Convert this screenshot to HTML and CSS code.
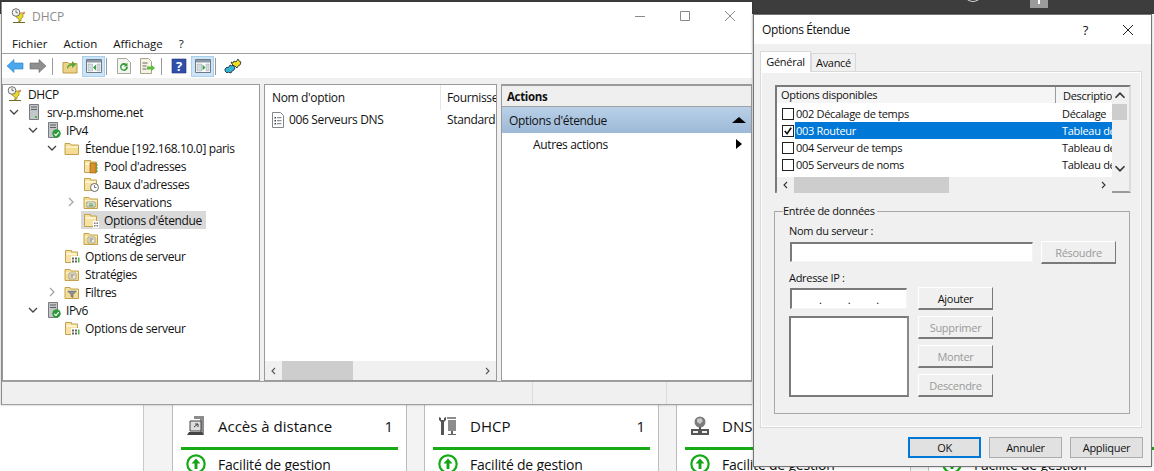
FILE: index.html
```html
<!DOCTYPE html>
<html lang="fr">
<head>
    <meta charset="UTF-8">
    <title>DHCP</title>
    <link rel="stylesheet" href="styles.css">
</head>
<body>
<svg class="defs" width="0" height="0">
    <symbol id="folder" viewBox="0 0 16 16">
        <path d="M1 3.500h5l1 1.500h7.500v9.500h-13.500z" fill="#f5dc94" stroke="#c4a24a"/>
        <path d="M2 6h12v2h-12z" fill="#fbeebf"/>
    </symbol>
    <symbol id="folder-open" viewBox="0 0 16 16">
        <path d="M1.500 2.500h6v1.500h6v10.500h-12z" fill="#f6e2a4" stroke="#c4a24a"/>
        <path d="M2.500 5h10v2h-10z" fill="#fdf3cf"/>
    </symbol>
    <symbol id="server" viewBox="0 0 16 16">
        <path d="M3.500 .5h9v15h-9z" fill="#c3c6c9" stroke="#777b7f"/>
        <path d="M5 2.500h6v1h-6zM5 5h6v1h-6z" fill="#5b5f62"/>
        <path d="M9 12h2v2h-2z" fill="#49b649"/>
    </symbol>
    <symbol id="check-badge" viewBox="0 0 16 16">
        <circle cx="8" cy="8" r="7.500" fill="#2e9b3a"/>
        <path d="M4 8.500l3 3 5-6" fill="none" stroke="#fff" stroke-width="2"/>
    </symbol>
    <symbol id="trophy" viewBox="0 0 16 16">
        <path d="M5 5h7v4l-2 2v2h-2v-2l-3-2z" fill="#e9d928" stroke="#8f8312" stroke-width=".7"/>
        <circle cx="5" cy="4.500" r="3.800" fill="#f4f4f4" stroke="#6e6e6e"/>
        <path d="M5 2.200v2.500h2" fill="none" stroke="#555" stroke-width=".8"/>
        <path d="M13 3l1 2.500-2 .5z" fill="#d8402a"/>
        <path d="M2 14.500h12M8 13v2" stroke="#6e6a20" stroke-width="1.200"/>
    </symbol>
    <symbol id="pane" viewBox="0 0 16 16">
        <path d="M.5 1.500h15v13h-15z" fill="#fff" stroke="#6f7a85"/>
        <path d="M1 2h14v2.500h-14z" fill="#8b98a5"/>
        <path d="M2 6h4.500v7h-4.500zM11 6h3v7h-3z" fill="#d5dade" stroke="#9aa3ab" stroke-width=".5"/>
    </symbol>
    <symbol id="list-doc" viewBox="0 0 16 16">
        <path d="M2.500 .5h8l3 3v12h-11z" fill="#fff" stroke="#80868b"/>
        <path d="M4.500 5h1.500v1.500h-1.500zM4.500 8h1.500v1.500h-1.500zM4.500 11h1.500v1.500h-1.500z" fill="#444"/>
        <path d="M7 5.700h4.500M7 8.700h4.500M7 11.700h4.500" stroke="#777"/>
    </symbol>
    <symbol id="up" viewBox="0 0 18 18">
        <circle cx="9" cy="9" r="7.800" fill="#fff" stroke="#16ab16" stroke-width="2"/>
        <path d="M9 4l4 4.500h-2.700v5h-2.600v-5h-2.700z" fill="#16a316"/>
    </symbol>
</svg>

<div class="desktop">
    <div class="topbar"><span class="arc"></span><span class="badge"><i></i></span></div>

    <div class="dash">
        <div class="dash-side"></div>
        <div class="dash-main">
            <div class="card">
                <div class="card-head">
                    <svg class="card-icon" viewBox="0 0 20 20"><path d="M8 0h10v18h-4v-15h-6z" fill="#8c8c8c"/><path d="M4 5h11v10h-11z" fill="#ddd" stroke="#444"/><path d="M8 11l4-3M9 8h3v3" fill="none" stroke="#444"/><path d="M1 19l2-3h13l2 3z" fill="#444"/></svg>
                    <span class="card-title">Accès à distance</span><span class="card-count">1</span>
                </div>
                <div class="card-line"></div>
                <div class="card-stat"><svg class="up-icon"><use href="#up"/></svg>Facilité de gestion</div>
            </div>
            <div class="card">
                <div class="card-head">
                    <svg class="card-icon" viewBox="0 0 20 20"><path d="M1 1v3l2 2v13h3v-13l2-2v-3l-2 1v2h-3v-2z" fill="#555"/><path d="M9 1h9v2h-9zM10 4h8v11h-8z" fill="#8c8c8c"/><path d="M13 15h2v3h3v1h-8v-1h3z" fill="#666"/></svg>
                    <span class="card-title">DHCP</span><span class="card-count">1</span>
                </div>
                <div class="card-line"></div>
                <div class="card-stat"><svg class="up-icon"><use href="#up"/></svg>Facilité de gestion</div>
            </div>
            <div class="card">
                <div class="card-head">
                    <svg class="card-icon" viewBox="0 0 20 20"><circle cx="10" cy="6" r="5.500" fill="#7b7b7b"/><path d="M7 3l4-1 2 3-3 3-3-2z" fill="#c8c8c8"/><path d="M9 11h2v2h-2z" fill="#555"/><path d="M1 13h18v6h-18z" fill="#555"/><path d="M3 15h5v2h-5zM12 15h5v2h-5z" fill="#eee"/></svg>
                    <span class="card-title">DNS</span>
                </div>
                <div class="card-line"></div>
                <div class="card-stat"><svg class="up-icon"><use href="#up"/></svg>Facilité de gestion</div>
            </div>
            <div class="card">
                <div class="card-head"></div>
                <div class="card-line"></div>
                <div class="card-stat"><svg class="up-icon"><use href="#up"/></svg>Facilité de gestion</div>
            </div>
        </div>
    </div>

    <div class="window mmc">
        <div class="titlebar">
            <svg class="ico title-ico"><use href="#trophy"/></svg>
            <span class="title-text">DHCP</span>
            <div class="win-btns">
                <svg viewBox="0 0 10 10"><path d="M0 5.500h10" stroke="#8a8a8a"/></svg>
                <svg viewBox="0 0 10 10"><path d="M.5 .5h9v9h-9z" fill="none" stroke="#8a8a8a"/></svg>
                <svg viewBox="0 0 10 10"><path d="M0 0l10 10M10 0l-10 10" stroke="#8a8a8a"/></svg>
            </div>
        </div>
        <div class="menubar">
            <span>Fichier</span><span>Action</span><span>Affichage</span><span>?</span>
        </div>
        <div class="toolbar">
            <svg class="tool" viewBox="0 0 16 16"><path d="M0 8l7-6.500v3.500h9v6h-9v3.500z" fill="#4aa8ec" stroke="#2b7fc4" stroke-width=".6"/></svg>
            <svg class="tool" viewBox="0 0 16 16"><path d="M16 8l-7-6.500v3.500h-9v6h9v3.500z" fill="#8f8f8f" stroke="#6a6a6a" stroke-width=".6"/></svg>
            <i class="tool-sep"></i>
            <svg class="tool" viewBox="0 0 16 16"><path d="M1 4.500h5l1 1h8v9.500h-14z" fill="#ecd287" stroke="#bd9c45"/><path d="M5 11c0-4 2-5 5-5v-3l4 3.500-4 3.500v-2.500c-2 0-3 1-5 3.500z" fill="#55a73a"/></svg>
            <span class="tool-on"><svg class="tool" viewBox="0 0 16 16"><use href="#pane"/><path d="M10 6.500v6l-3-3z" fill="#3aa34a"/></svg></span>
            <i class="tool-sep"></i>
            <svg class="tool" viewBox="0 0 16 16"><path d="M1.500 .5h9l4 4v11h-13z" fill="#f4f4f0" stroke="#a8a8a0"/><path d="M12 9a4 4 0 1 1-1.500-3.200l1-1v3.700h-3.700l1.200-1.200a2.300 2.300 0 1 0 1 1.700z" fill="#3d9c3d"/></svg>
            <svg class="tool" viewBox="0 0 16 16"><path d="M1.500 .5h8l3 3v12h-11z" fill="#f6f3e4" stroke="#a8a48c"/><path d="M3.500 5h5M3.500 8h4M3.500 11h4" stroke="#666"/><path d="M16 10l-4-3.500v2h-4v3h4v2z" fill="#5dbb3f"/></svg>
            <i class="tool-sep"></i>
            <svg class="tool" viewBox="0 0 16 16"><path d="M1 1h14v14h-14z" fill="#2f4fa8" stroke="#1f3578" stroke-width=".6"/><text x="8" y="13" class="help-q">?</text></svg>
            <span class="tool-on"><svg class="tool" viewBox="0 0 16 16"><use href="#pane"/><path d="M7.500 6.500v6l3-3z" fill="#3aa34a"/></svg></span>
            <i class="tool-sep"></i>
            <svg class="tool" viewBox="0 0 16 16"><path d="M0 11l2-2 1 1 2-3 2 1 1-1 2 3-1 2-2 1-1 2-3-1-1 1-2-2z" fill="#35b5d6" stroke="#14222e" stroke-width=".8"/><path d="M6 4l2 1 1-2 2 1 2-3 1 2 2 1-1 3-2 1-1 2-2-2-1 0-2-2z" fill="#f2e01f" stroke="#14222e" stroke-width=".8"/></svg>
        </div>
        <div class="panes">
            <div class="pane tree">
                <div class="row lv0"><div class="node"><svg class="ico"><use href="#trophy"/></svg><span>DHCP</span></div></div>
                <div class="row lv1"><svg class="chev" viewBox="0 0 10 10"><path d="M1 3l4 4 4-4" /></svg><div class="node"><svg class="ico"><use href="#server"/></svg><span>srv-p.mshome.net</span></div></div>
                <div class="row lv2"><svg class="chev" viewBox="0 0 10 10"><path d="M1 3l4 4 4-4" /></svg><div class="node"><svg class="ico"><use href="#server"/><use href="#check-badge" x="7" y="7" width="9" height="9"/></svg><span>IPv4</span></div></div>
                <div class="row lv3"><svg class="chev" viewBox="0 0 10 10"><path d="M1 3l4 4 4-4" /></svg><div class="node"><svg class="ico"><use href="#folder"/></svg><span>Étendue [192.168.10.0] paris</span></div></div>
                <div class="row lv4"><div class="node"><svg class="ico"><use href="#folder-open"/><path d="M7 5h6v10h-6z" fill="#d9912c" stroke="#8f5a16" stroke-width=".6"/><path d="M14 6v2M14 9v2M14 12v2" stroke="#3aa34a"/></svg><span>Pool d'adresses</span></div></div>
                <div class="row lv4"><div class="node"><svg class="ico"><use href="#folder-open"/><circle cx="11.500" cy="11.500" r="4" fill="#fff" stroke="#666"/><path d="M11.500 9v2.500h2" fill="none" stroke="#555" stroke-width=".8"/></svg><span>Baux d'adresses</span></div></div>
                <div class="row lv4"><svg class="chev light" viewBox="0 0 10 10"><path d="M3 1l4 4-4 4"/></svg><div class="node"><svg class="ico"><use href="#folder"/><path d="M4 8h8v5h-8z" fill="#fff" stroke="#777" stroke-width=".7"/><path d="M5.500 10h5M5.500 11.800h5" stroke="#3d8c3d"/></svg><span>Réservations</span></div></div>
                <div class="row lv4"><div class="node selected"><svg class="ico"><use href="#folder-open"/><path d="M10 9h6v7h-6z" fill="#fff"/><path d="M11 10.500h1.500v1.500h-1.500zM13.500 10.500h1.500v1.500h-1.500zM11 13h1.500v1.500h-1.500zM13.500 13h1.500v1.500h-1.500z" fill="#777"/></svg><span>Options d'étendue</span></div></div>
                <div class="row lv4"><div class="node"><svg class="ico"><use href="#folder"/><path d="M5 7h7v6h-7z" fill="#f3edd8" stroke="#8c8c7c" stroke-width=".7"/><path d="M6.500 9h4M6.500 11h2.500" stroke="#777"/></svg><span>Stratégies</span></div></div>
                <div class="row lv3"><div class="node"><svg class="ico"><use href="#folder-open"/><path d="M7 8h9v8h-9z" fill="#fff"/><path d="M8 9.500h2v2h-2zM11 9.500h2v2h-2zM8 12.500h2v2h-2zM11 12.500h2v2h-2z" fill="#666"/><path d="M14 9.500h1.500v5h-1.500z" fill="#4fb04f"/></svg><span>Options de serveur</span></div></div>
                <div class="row lv3"><div class="node"><svg class="ico"><use href="#folder"/><path d="M5 7h7v6h-7z" fill="#f3edd8" stroke="#8c8c7c" stroke-width=".7"/><path d="M6.500 9h4M6.500 11h2.500" stroke="#777"/></svg><span>Stratégies</span></div></div>
                <div class="row lv3"><svg class="chev light" viewBox="0 0 10 10"><path d="M3 1l4 4-4 4"/></svg><div class="node"><svg class="ico"><use href="#folder"/><path d="M3.500 7h9l-3.500 3.500v3l-2-1v-2z" fill="#8c9196" stroke="#55595c" stroke-width=".5"/></svg><span>Filtres</span></div></div>
                <div class="row lv2"><svg class="chev" viewBox="0 0 10 10"><path d="M1 3l4 4 4-4" /></svg><div class="node"><svg class="ico"><use href="#server"/><use href="#check-badge" x="7" y="7" width="9" height="9"/></svg><span>IPv6</span></div></div>
                <div class="row lv3"><div class="node"><svg class="ico"><use href="#folder-open"/><path d="M7 8h9v8h-9z" fill="#fff"/><path d="M8 9.500h2v2h-2zM11 9.500h2v2h-2zM8 12.500h2v2h-2zM11 12.500h2v2h-2z" fill="#666"/><path d="M14 9.500h1.500v5h-1.500z" fill="#4fb04f"/></svg><span>Options de serveur</span></div></div>
            </div>
            <div class="pane list">
                <div class="list-head"><span class="col-name">Nom d'option</span><span class="col-prov">Fournisseur</span></div>
                <div class="list-row"><span class="col-name"><svg class="ico doc"><use href="#list-doc"/></svg>006 Serveurs DNS</span><span class="col-prov">Standard</span></div>
                <div class="list-fill"></div>
                <div class="hscroll">
                    <svg class="sb-arrow" viewBox="0 0 8 8"><path d="M5.500 1l-3 3 3 3"/></svg>
                    <div class="sb-track"><i class="thumb-list"></i></div>
                    <svg class="sb-arrow" viewBox="0 0 8 8"><path d="M2.500 1l3 3-3 3"/></svg>
                </div>
            </div>
            <div class="pane actions">
                <div class="act-head">Actions</div>
                <div class="act-group"><span>Options d'étendue</span><i class="tri-up"></i></div>
                <div class="act-item"><span>Autres actions</span><i class="tri-right"></i></div>
            </div>
        </div>
        <div class="statusbar"><i></i><i></i></div>
    </div>

    <div class="window dialog">
        <div class="dlg-title">
            <span>Options Étendue</span>
            <span class="dlg-help">?</span>
            <svg class="dlg-close" viewBox="0 0 10 10"><path d="M0 0l10 10M10 0l-10 10" stroke="#222"/></svg>
        </div>
        <div class="dlg-body">
            <div class="tabs"><span class="tab on">Général</span><span class="tab">Avancé</span></div>
            <div class="tab-page">
                <div class="lv">
                    <div class="lv-grid">
                        <div class="lv-view">
                            <div class="lv-head"><span class="lv-c1">Options disponibles</span><span class="lv-c2">Description</span></div>
                            <div class="lv-row"><span class="cb"></span><span class="lv-c1">002 Décalage de temps</span><span class="lv-c2">Décalage</span></div>
                            <div class="lv-row sel"><span class="cb"><svg viewBox="0 0 11 11"><path d="M2 5.500l2.500 3 4.500-6.500" fill="none" stroke="#111" stroke-width="1.800"/></svg></span><span class="lv-c1">003 Routeur</span><span class="lv-c2">Tableau de</span></div>
                            <div class="lv-row"><span class="cb"></span><span class="lv-c1">004 Serveur de temps</span><span class="lv-c2">Tableau de</span></div>
                            <div class="lv-row"><span class="cb"></span><span class="lv-c1">005 Serveurs de noms</span><span class="lv-c2">Tableau de</span></div>
                        </div>
                        <div class="vscroll">
                            <svg class="sb-arrow dark" viewBox="0 0 8 8"><path d="M1 5.500l3-3 3 3"/></svg>
                            <div class="v-track"><i></i></div>
                            <svg class="sb-arrow dark" viewBox="0 0 8 8"><path d="M1 2.500l3 3 3-3"/></svg>
                        </div>
                    </div>
                    <div class="hscroll small">
                        <svg class="sb-arrow dark" viewBox="0 0 8 8"><path d="M5.500 1l-3 3 3 3"/></svg>
                        <div class="sb-track"><i class="thumb-dlg"></i></div>
                        <svg class="sb-arrow dark" viewBox="0 0 8 8"><path d="M2.500 1l3 3-3 3"/></svg>
                    </div>
                </div>
                <fieldset class="entry">
                    <legend>Entrée de données</legend>
                    <label class="lbl">Nom du serveur :</label>
                    <div class="entry-row">
                        <div class="field name-field"></div>
                        <button class="btn off">Résoudre</button>
                    </div>
                    <label class="lbl ip-lbl">Adresse IP :</label>
                    <div class="entry-split">
                        <div class="entry-left">
                            <div class="field ip-field"><span>.</span><span>.</span><span>.</span></div>
                            <div class="listbox"></div>
                        </div>
                        <div class="entry-btns">
                            <button class="btn">Ajouter</button>
                            <button class="btn off">Supprimer</button>
                            <button class="btn off">Monter</button>
                            <button class="btn off">Descendre</button>
                        </div>
                    </div>
                </fieldset>
            </div>
            <div class="dlg-foot">
                <button class="pbtn default">OK</button>
                <button class="pbtn">Annuler</button>
                <button class="pbtn">Appliquer</button>
            </div>
        </div>
    </div>
</div>
</body>
</html>
```
FILE: styles.css
```css
*{margin: 0;padding: 0;box-sizing: border-box;}
html,body{width: 1154px;height: 471px;overflow: hidden;}
body{font-family: "Open Sans","Noto Sans",sans-serif;font-size: 12px;color: #111;letter-spacing: -.35px;}
.defs{position: absolute;}
.desktop{position: relative;width: 1154px;height: 471px;background: #fff;overflow: hidden;}
.ico{width: 16px;height: 16px;flex: none;overflow: visible;}

/* stuff behind the windows */
.topbar{height: 14px;background: #3d3d3d;position: relative;}
.arc{position: absolute;left: 966px;top: -8px;width: 14px;height: 10px;border-radius: 50%;border: 1px solid #ddd;}
.badge{position: absolute;left: 1030px;top: 0;width: 18px;height: 8px;background: #9b9b9b;}
.badge i{display: block;width: 2px;height: 4px;background: #fff;margin: 0 auto;}
.dash{position: absolute;left: 0;top: 405px;width: 1154px;height: 66px;display: flex;}
.dash-side{width: 144px;flex: none;background: #fff;border-right: 1px solid #c9c9c9;}
.dash-main{flex: none;display: flex;gap: 17px;background: #f3f3f3;padding-left: 28px;}
.card{width: 235px;flex: none;background: #fff;border: 1px solid #bdbdbd;border-width: 0 1px;padding: 0 8px;}
.card-head{height: 42px;display: flex;align-items: center;font-size: 15px;padding: 0 5px 0 5px;letter-spacing: 0;}
.card-icon{width: 20px;height: 20px;margin-right: 12px;flex: none;}
.card-title{flex: 1;}
.card-line{height: 3px;background: #16ab16;}
.card-stat{display: flex;align-items: center;font-size: 14px;height: 28px;padding-left: 5px;letter-spacing: -.2px;white-space: nowrap;}
.up-icon{width: 20px;height: 20px;margin-right: 12px;flex: none;}

/* mmc window */
.window{position: absolute;}
.mmc{left: 1px;top: 2px;width: 751px;height: 403px;background: #fff;display: flex;flex-direction: column;border-left: 1px solid #8a8a8a;box-shadow: 0 0 2px rgba(0,0,0,.3);}
.titlebar{height: 31px;flex: none;display: flex;align-items: center;padding-left: 9px;}
.title-ico{margin-top: -3px;}
.title-text{margin-left: 5px;color: #8c8c8c;font-size: 12px;margin-top: -3px;letter-spacing: 0;}
.win-btns{margin-left: auto;display: flex;gap: 35px;padding-right: 17px;margin-top: -3px;}
.win-btns svg{width: 10px;height: 10px;}
.menubar{height: 21px;flex: none;display: flex;align-items: center;padding-left: 10px;gap: 16px;font-size: 11.500px;border-bottom: 1px solid #a0a0a0;letter-spacing: 0;}
.toolbar{height: 24px;flex: none;display: flex;align-items: center;padding-left: 5px;background: #fff;}
.tool{width: 16px;height: 16px;flex: none;margin-right: 7px;overflow: visible;}
.tool-sep{width: 1px;height: 17px;background: #9a9a9a;margin: 0 9px 0 -1px;flex: none;}
.tool-on{width: 23px;height: 21px;flex: none;background: #cce4f7;border: 1px solid #a9cfeb;display: flex;align-items: center;justify-content: center;margin: 0 2px 0 -3px;}
.tool-on .tool{margin: 0;}
.help-q{font: bold 13px "Open Sans",sans-serif;fill: #fff;text-anchor: middle;}
.panes{flex: 1;min-height: 0;display: grid;grid-template-columns: 258px 233px 251px;column-gap: 4px;background: #f0f0f0;padding-top: 6px;padding-left: 0;}
.pane{background: #fff;border: 1px solid #9a9a9a;border-right-width: 1px;min-height: 0;overflow: hidden;}
.statusbar{height: 24px;flex: none;background: #f0f0f0;border-top: 1px solid #a0a0a0;border-bottom: 1px solid #a0a0a0;display: flex;padding-left: 530px;gap: 133px;}
.statusbar i{width: 1px;background: #dcdcdc;}

/* tree */
.tree{padding-top: 0;}
.row{height: 18px;display: flex;align-items: center;white-space: nowrap;}
.lv0{padding-left: 2px;}
.lv1{padding-left: 21px;}
.lv2{padding-left: 40px;}
.lv3{padding-left: 59px;}
.lv4{padding-left: 78px;}
.chev{width: 10px;height: 10px;margin: 0 5px 0 -15px;flex: none;fill: none;stroke: #444;stroke-width: 1.300;}
.chev.light{stroke: #a6a6a6;}
.node{display: flex;align-items: center;gap: 5px;height: 18px;padding: 0 4px 0 2px;}
.node.selected{background: #d9d9d9;}

/* list pane */
.list{display: flex;flex-direction: column;}
.list-head{height: 25px;flex: none;display: flex;align-items: center;}
.list-row{height: 19px;flex: none;display: flex;align-items: center;}
.list-fill{flex: 1;}
.col-name{width: 176px;flex: none;padding-left: 7px;display: flex;align-items: center;gap: 3px;border-right: 1px solid #e5e5e5;height: 100%;}
.list-row .col-name{border: 0;}
.col-prov{padding-left: 6px;white-space: nowrap;overflow: hidden;flex: 1;}
.doc{margin-left: -2px;}
.hscroll{height: 19px;flex: none;background: #f0f0f0;display: flex;align-items: center;}
.hscroll.small{height: 16px;margin-right: 17px;}
.sb-arrow{width: 17px;height: 8px;flex: none;fill: none;stroke: #555;stroke-width: 1.100;}
.sb-arrow.dark{stroke: #333;}
.sb-track{flex: 1;height: 100%;}
.sb-track i{display: block;height: 100%;background: #cdcdcd;}
.thumb-list{width: 71px;}
.thumb-dlg{width: 155px;}

/* actions pane */
.actions{border-top-width: 2px;}
.act-head{height: 21px;background: #efefef;border-bottom: 1px solid #a0a0a0;font-weight: 700;padding-left: 5px;line-height: 22px;font-size: 11.500px;}
.act-group{height: 26px;background: linear-gradient(#b9d0e7,#9db9d8);display: flex;align-items: center;padding: 0 5px 0 7px;justify-content: space-between;}
.tri-up{width: 0;height: 0;border: 7px solid transparent;border-top: 0;border-bottom: 6px solid #000;}
.act-item{height: 24px;display: flex;align-items: center;justify-content: space-between;padding: 0 9px 2px 31px;}
.tri-right{width: 0;height: 0;border: 5px solid transparent;border-right: 0;border-left: 6px solid #000;}

/* dialog */
.dialog{left: 753px;top: 14px;width: 399px;height: 453px;border: 1px solid #747474;display: flex;flex-direction: column;font-size: 11px;letter-spacing: -.3px;background: #f0f0f0;box-shadow: 0 0 3px rgba(0,0,0,.25);}
.dlg-title{height: 29px;flex: none;background: #fff;display: flex;align-items: center;padding: 0 18px 0 8px;font-size: 12px;letter-spacing: -.4px;}
.dlg-help{margin-left: auto;margin-right: 35px;font-size: 13px;}
.dlg-close{width: 10px;height: 10px;}
.dlg-body{flex: 1;padding: 7px 9px 0 6px;display: flex;flex-direction: column;min-height: 0;}
.tabs{display: flex;align-items: flex-end;height: 21px;position: relative;z-index: 1;margin-bottom: -1px;}
.tab{height: 19px;width: 45px;border: 1px solid #d9d9d9;border-bottom: 0;display: flex;align-items: center;justify-content: center;padding-bottom: 2px;}
.tab.on{height: 21px;width: 51px;background: #fff;border-bottom: 0;}
.tab-page{height: 357px;flex: none;border: 1px solid #d9d9d9;background: #f0f0f0;padding: 13px 10px 0 14px;box-shadow: inset 0 0 0 1px #fff;}
.lv{width: 356px;height: 108px;border: 2px solid #7a7a7a;border-right-color: #dcdcdc;border-bottom-color: #9a9a9a;background: #f0f0f0;}
.lv-grid{display: flex;height: 90px;background: #fff;margin-right: 2px;}
.lv-view{flex: 1;min-width: 0;overflow: hidden;}
.lv-head{height: 17px;display: flex;align-items: center;background: #f5f5f5;border-bottom: 1px solid #fff;margin-bottom: 1px;}
.lv-head .lv-c1{width: 279px;flex: none;padding-left: 4px;border-right: 1px solid #9a9a9a;height: 100%;line-height: 16px;}
.lv-head .lv-c2{padding-left: 7px;white-space: nowrap;overflow: hidden;}
.lv-row{height: 17px;display: flex;align-items: center;white-space: nowrap;padding-left: 5px;}
.cb{width: 12px;height: 12px;border: 1px solid #222;background: #fff;flex: none;margin-right: 1px;display: block;}
.cb svg{display: block;width: 10px;height: 10px;}
.lv-row .lv-c1{width: 266px;flex: none;padding-left: 1px;height: 100%;line-height: 17px;}
.lv-row .lv-c2{padding-left: 1px;height: 100%;line-height: 17px;flex: 1;overflow: hidden;}
.lv-row.sel .lv-c1,.lv-row.sel .lv-c2{background: #0078d7;color: #fff;}
.vscroll{width: 15px;flex: none;display: flex;flex-direction: column;align-items: center;background: #f0f0f0;}
.vscroll .sb-arrow{height: 17px;width: 12px;}
.v-track{flex: 1;width: 100%;padding-top: 0;}
.v-track i{display: block;height: 16px;background: #cdcdcd;}
.entry{width: 356px;height: 210px;margin-top: 11px;margin-left: -1px;border: 1px solid #a8a8a8;padding: 0 0 0 14px;}
.entry legend{margin-left: -6px;padding: 0 2px 0 0;line-height: 14px;}
.lbl{display: block;height: 14px;line-height: 14px;margin-top: 6px;}
.entry-row{display: flex;gap: 8px;margin-top: 3px;padding-left: 1px;align-items: flex-start;}
.field{background: #fff;border: 1px solid #f4f4f4;border-top: 2px solid #7a7a7a;border-left: 2px solid #7a7a7a;}
.name-field{width: 243px;height: 20px;margin-top: 1px;}
.btn{width: 75px;height: 23px;background: #f0f0f0;border: 1px solid #fff;border-right-color: #7a7a7a;border-bottom: 2px solid #7a7a7a;font: inherit;letter-spacing: inherit;color: #111;}
.btn.off{color: #9a9a9a;}
.ip-lbl{margin-top: 7px;}
.entry-split{display: flex;gap: 9px;margin-top: 2px;}
.entry-left{width: 120px;padding-top: 1px;}
.ip-field{width: 117px;height: 21px;margin-left: 1px;display: flex;justify-content: space-around;padding: 0 14px 0 14px;line-height: 19px;}
.listbox{width: 120px;height: 81px;margin-top: 7px;background: #fff;border: 2px solid #7a7a7a;border-right-color: #8a8a8a;}
.entry-btns{display: flex;flex-direction: column;gap: 6px;}
.dlg-foot{display: flex;justify-content: flex-end;gap: 8px;padding: 9px 0 0;margin-right: -1px;}
.pbtn{width: 73px;height: 21px;background: #e1e1e1;border: 1px solid #adadad;font: inherit;letter-spacing: inherit;color: #111;}
.pbtn.default{border: 2px solid #0078d7;}
```
